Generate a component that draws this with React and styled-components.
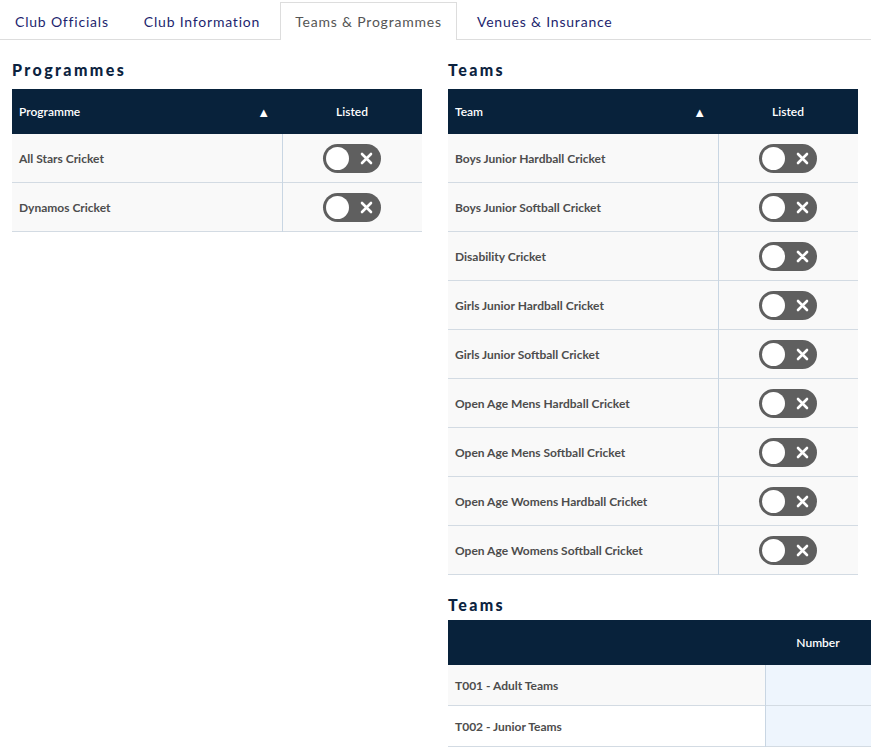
import React from "react";
import styled, { createGlobalStyle } from "styled-components";

const GlobalStyle = createGlobalStyle`
  body {
    margin: 0;
    background: #fff;
    font-family: Lato, "Noto Sans", Arial, sans-serif;
  }
`;

const Page = styled.div`
  width: 871px;
`;

const TabBar = styled.ul`
  display: flex;
  list-style: none;
  margin: 0;
  padding: 2px 0 0 0;
  height: 37px;
  border-bottom: 1px solid #dddddd;
`;

const Tab = styled.li`
  box-sizing: border-box;
  height: 38px;
  padding: 0 14px;
  margin-right: 5px;
  display: flex;
  align-items: center;
  font-size: 14px;
  letter-spacing: 0.8px;
  color: ${(p) => (p.active ? "#555555" : "#1d1f6e")};
  border: 1px solid ${(p) => (p.active ? "#dddddd" : "transparent")};
  border-bottom: none;
  background: ${(p) => (p.active ? "#fff" : "transparent")};
  margin-bottom: ${(p) => (p.active ? "-1px" : "0")};
  cursor: pointer;
`;

const Content = styled.div`
  display: grid;
  grid-template-columns: 423px 423px;
  column-gap: 13px;
  padding: 20px 0 0 12px;
  align-items: start;
`;

const Column = styled.div`
  display: flex;
  flex-direction: column;
`;

const Section = styled.section`
  margin-top: ${(p) => p.spaced || 0}px;
`;

const Heading = styled.h3`
  margin: 0 0 ${(p) => p.gap || 9}px 0;
  height: 20px;
  line-height: 20px;
  font-size: 16px;
  font-weight: 900;
  letter-spacing: 2.4px;
  color: #0b2340;
`;

const Table = styled.table`
  width: ${(p) => (p.full ? "423px" : "410px")};
  border-collapse: collapse;
  table-layout: fixed;
`;

const HeadCell = styled.th`
  height: 45px;
  padding: 0 7px;
  background: #08223b;
  color: #fff;
  font-size: 12px;
  font-weight: 600;
  text-align: ${(p) => (p.center ? "center" : "left")};
  width: ${(p) => p.w || "auto"};
  position: relative;
`;

const SortArrow = styled.span`
  position: absolute;
  right: 12px;
  top: 50%;
  transform: translateY(-50%);
  font-size: 13px;
`;

const Row = styled.tr`
  background: ${(p) => (p.plain ? "#ffffff" : "#f9f9f9")};
  border-bottom: 1px solid #d3dbe3;
`;

const Cell = styled.td`
  height: ${(p) => p.h || 48}px;
  padding: 0 7px;
  font-size: 12px;
  font-weight: 700;
  color: #4d4d4d;
  text-align: ${(p) => (p.center ? "center" : "left")};
  background: ${(p) => p.bg || "transparent"};
  border-left: ${(p) => (p.divider ? "1px solid #c9d6e3" : "none")};
`;

const Toggle = styled.span`
  display: inline-flex;
  align-items: center;
  justify-content: space-between;
  box-sizing: border-box;
  width: 58px;
  height: 29px;
  padding: 0 8px 0 3px;
  border-radius: 15px;
  background: #5f5f5f;
  vertical-align: middle;
`;

const Knob = styled.span`
  width: 23px;
  height: 23px;
  border-radius: 50%;
  background: #fff;
`;

const CrossIcon = () => (
  <svg width="13" height="13" viewBox="0 0 13 13">
    <path
      d="M2 2 L11 11 M11 2 L2 11"
      stroke="#fff"
      strokeWidth="2.6"
      strokeLinecap="round"
    />
  </svg>
);

const ListedToggle = () => (
  <Toggle>
    <Knob />
    <CrossIcon />
  </Toggle>
);

const programmes = ["All Stars Cricket", "Dynamos Cricket"];

const teams = [
  "Boys Junior Hardball Cricket",
  "Boys Junior Softball Cricket",
  "Disability Cricket",
  "Girls Junior Hardball Cricket",
  "Girls Junior Softball Cricket",
  "Open Age Mens Hardball Cricket",
  "Open Age Mens Softball Cricket",
  "Open Age Womens Hardball Cricket",
  "Open Age Womens Softball Cricket",
];

const teamNumbers = ["T001 - Adult Teams", "T002 - Junior Teams"];

const ListedTable = ({ label, items }) => (
  <Table>
    <thead>
      <tr>
        <HeadCell w="256px">
          {label}
          <SortArrow>▲</SortArrow>
        </HeadCell>
        <HeadCell center>Listed</HeadCell>
      </tr>
    </thead>
    <tbody>
      {items.map((item) => (
        <Row key={item}>
          <Cell>{item}</Cell>
          <Cell center divider>
            <ListedToggle />
          </Cell>
        </Row>
      ))}
    </tbody>
  </Table>
);

export default function App() {
  const tabs = [
    "Club Officials",
    "Club Information",
    "Teams & Programmes",
    "Venues & Insurance",
  ];
  return (
    <Page>
      <GlobalStyle />
      <TabBar>
        {tabs.map((t) => (
          <Tab key={t} active={t === "Teams & Programmes"}>
            {t}
          </Tab>
        ))}
      </TabBar>
      <Content>
        <Column>
          <Section>
            <Heading>Programmes</Heading>
            <ListedTable label="Programme" items={programmes} />
          </Section>
        </Column>
        <Column>
          <Section>
            <Heading>Teams</Heading>
            <ListedTable label="Team" items={teams} />
          </Section>
          <Section spaced={20}>
            <Heading gap={5}>Teams</Heading>
            <Table full>
              <thead>
                <tr>
                  <HeadCell w="303px" />
                  <HeadCell center>Number</HeadCell>
                </tr>
              </thead>
              <tbody>
                {teamNumbers.map((t, i) => (
                  <Row key={t} plain={i === 1}>
                    <Cell h={40}>{t}</Cell>
                    <Cell h={40} divider bg="#eef5fd" />
                  </Row>
                ))}
              </tbody>
            </Table>
          </Section>
        </Column>
      </Content>
    </Page>
  );
}
